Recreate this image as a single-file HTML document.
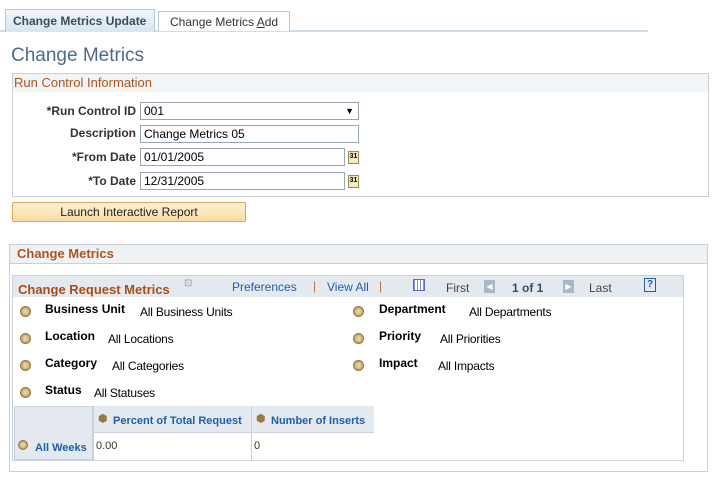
<!DOCTYPE html>
<html><head><style>
*{margin:0;padding:0;box-sizing:border-box}
body{width:726px;height:480px;background:#fff;font-family:Arial,"Liberation Sans",sans-serif;font-size:12px;color:#000;position:relative;overflow:hidden}
.a{position:absolute;white-space:nowrap}
.lbl{font-weight:bold;color:#333;text-align:right;width:130px;left:6px}
.inp{position:absolute;border:1px solid #9aa5b3;height:18px;background:#fff;padding-left:3px;font-size:12px;line-height:16px}
.cal{position:absolute;width:11px;height:13px;background:#f3e9c4;border:1px solid #9a8a50;font-size:7px;line-height:10px;text-align:center;font-weight:bold}
.rad{position:absolute;width:11px;height:11px;border-radius:50%;background:radial-gradient(circle,#e6cf9d 30%,#b89a5f 70%);border:1px solid #8f7a50}
.k{font-weight:bold}
.lnk{color:#1f5ea8}
.hd{color:#aa4f12}
.v{position:absolute;white-space:nowrap;font-size:12px;letter-spacing:-0.2px}
</style></head><body>
<div class="a" style="left:0;top:30px;width:648px;height:2px;background:#cfdcea"></div>
<div class="a" style="left:5px;top:9px;width:150px;height:23px;background:linear-gradient(#f2f6fa,#d8e4ef);border:1px solid #b8c8d8;border-bottom:none;font-weight:bold;color:#3b4c5e;padding:4px 0 0 7px">Change Metrics Update</div>
<div class="a" style="left:158px;top:11px;width:132px;height:20px;background:#fff;border:1px solid #b8c8d8;border-bottom:none;color:#333;padding:3px 0 0 11px">Change Metrics <u>A</u>dd</div>
<div class="a" style="left:11px;top:45px;font-size:19px;color:#4e6b8c">Change Metrics</div>

<div class="a" style="left:12px;top:73px;width:697px;height:124px;border:1px solid #c8cfd6"></div>
<div class="a" style="left:13px;top:74px;width:695px;height:18px;background:#f2f5f7;color:#b0541c;font-size:13px;padding:1px 0 0 1px">Run Control Information</div>
<div class="a lbl" style="top:104px">*Run Control ID</div>
<div class="inp" style="left:140px;top:102px;width:219px">001<span style="position:absolute;right:4px;top:0;font-size:9px">▼</span></div>
<div class="a lbl" style="top:126px">Description</div>
<div class="inp" style="left:140px;top:125px;width:219px">Change Metrics 05</div>
<div class="a lbl" style="top:150px">*From Date</div>
<div class="inp" style="left:140px;top:148px;width:205px">01/01/2005</div>
<div class="cal" style="left:348px;top:151px">31</div>
<div class="a lbl" style="top:174px">*To Date</div>
<div class="inp" style="left:140px;top:172px;width:205px">12/31/2005</div>
<div class="cal" style="left:348px;top:175px">31</div>
<div class="a" style="left:12px;top:202px;width:234px;height:20px;background:linear-gradient(#fdf0d4,#f9dca3);border:1px solid #e3a55a;border-radius:2px;text-align:center;line-height:18px;color:#222">Launch Interactive Report</div>

<div class="a" style="left:9px;top:244px;width:699px;height:228px;border:1px solid #c8cfd6"></div>
<div class="a" style="left:10px;top:245px;width:697px;height:19px;background:#eef2f5;border-bottom:1px solid #c8cfd6;font-weight:bold;color:#b0541c;font-size:13px;padding:1px 0 0 7px">Change Metrics</div>
<div class="a" style="left:12px;top:275px;width:672px;height:186px;border:1px solid #c8d2dc"></div>
<div class="a" style="left:13px;top:276px;width:670px;height:21px;background:#e3e9ef"></div>
<div class="a hd k" style="left:18px;top:282px;font-size:13px">Change Request Metrics</div>
<div class="a" style="left:184px;top:278px;font-size:10px;color:#999">⊡</div>
<div class="a lnk" style="left:232px;top:280px">Preferences</div>
<div class="a" style="left:313px;top:279px;color:#c07030">|</div>
<div class="a lnk" style="left:327px;top:280px">View All</div>
<div class="a" style="left:379px;top:279px;color:#c07030">|</div>
<div class="a" style="left:413px;top:279px;width:12px;height:12px;border:1px solid #5a6fb0;background:repeating-linear-gradient(90deg,#8090d0 0 1px,#fff 1px 3px)"></div>
<div class="a" style="left:446px;top:281px;color:#444">First</div>
<div class="a" style="left:484px;top:280px;width:11px;height:13px;background:#a9b8c8;color:#fff;font-size:8px;text-align:center;line-height:13px">◀</div>
<div class="a k" style="left:512px;top:281px;color:#3b4c5e">1 of 1</div>
<div class="a" style="left:563px;top:280px;width:11px;height:13px;background:#a9b8c8;color:#fff;font-size:8px;text-align:center;line-height:13px">▶</div>
<div class="a" style="left:589px;top:281px;color:#444">Last</div>
<div class="a" style="left:644px;top:278px;width:12px;height:14px;border:1px solid #1f5ea8;color:#1f5ea8;font-size:10px;font-weight:bold;text-align:center;line-height:12px">?</div>

<div class="rad" style="left:20px;top:306px"></div><div class="a k" style="left:45px;top:302px">Business Unit</div><div class="v" style="left:140px;top:305px">All Business Units</div>
<div class="rad" style="left:20px;top:333px"></div><div class="a k" style="left:45px;top:329px">Location</div><div class="v" style="left:108px;top:332px">All Locations</div>
<div class="rad" style="left:20px;top:360px"></div><div class="a k" style="left:45px;top:356px">Category</div><div class="v" style="left:112px;top:359px">All Categories</div>
<div class="rad" style="left:20px;top:387px"></div><div class="a k" style="left:45px;top:383px">Status</div><div class="v" style="left:94px;top:386px">All Statuses</div>
<div class="rad" style="left:353px;top:306px"></div><div class="a k" style="left:379px;top:302px">Department</div><div class="v" style="left:469px;top:305px">All Departments</div>
<div class="rad" style="left:353px;top:333px"></div><div class="a k" style="left:379px;top:329px">Priority</div><div class="v" style="left:440px;top:332px">All Priorities</div>
<div class="rad" style="left:353px;top:360px"></div><div class="a k" style="left:379px;top:356px">Impact</div><div class="v" style="left:438px;top:359px">All Impacts</div>

<div class="a" style="left:14px;top:406px;width:79px;height:54px;background:#e3e9ef;border:1px solid #c8d2dc"></div>
<div class="a" style="left:93px;top:406px;width:281px;height:27px;background:#e3e9ef;border-bottom:1px solid #c8d2dc"></div>
<div class="a" style="left:251px;top:406px;width:1px;height:54px;background:#c8d2dc"></div>
<div class="a" style="left:93px;top:406px;width:1px;height:54px;background:#c8d2dc"></div>
<div class="a" style="left:98px;top:412px;font-size:11px;color:#9a7a40">⬢</div>
<div class="a lnk" style="left:113px;top:415px;font-size:11px;font-weight:bold">Percent of Total Request</div>
<div class="a" style="left:256px;top:412px;font-size:11px;color:#9a7a40">⬢</div>
<div class="a lnk" style="left:271px;top:415px;font-size:11px;font-weight:bold">Number of Inserts</div>
<div class="rad" style="left:18px;top:440px;width:10px;height:10px"></div>
<div class="a lnk k" style="left:35px;top:442px;font-size:11px">All Weeks</div>
<div class="a" style="left:96px;top:440px;font-size:11px;color:#333">0.00</div>
<div class="a" style="left:254px;top:440px;font-size:11px;color:#333">0</div>
</body></html>
